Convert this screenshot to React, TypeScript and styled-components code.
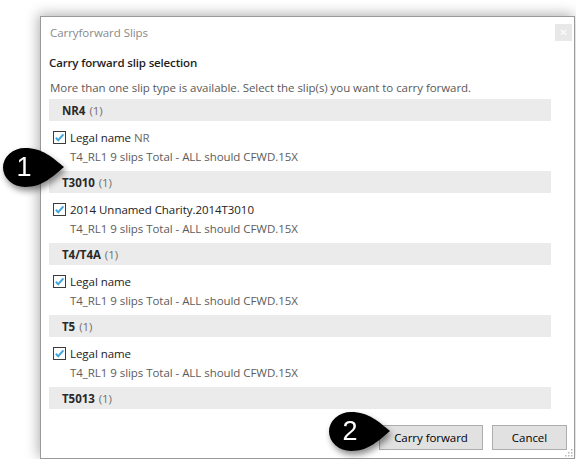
import React from 'react';
import styled, { createGlobalStyle } from 'styled-components';

const GlobalStyle = createGlobalStyle`
    html, body {
        margin: 0;
        padding: 0;
        background: #ffffff;
        overflow: hidden;
    }
    body {
        font-family: 'Open Sans', 'Noto Sans', sans-serif;
        font-size: 11.5px;
        letter-spacing: -0.05px;
    }
`;

type Slip = {
    label: string;
    suffix?: string;
    detail: string;
};

type Section = {
    name: string;
    count: number;
    slips: Slip[];
};

const DETAIL = 'T4_RL1 9 slips Total - ALL should CFWD.15X';

// T5013's slip sits below the fold of the list, so only its header is shown
const sections: Section[] = [
    { name: 'NR4', count: 1, slips: [{ label: 'Legal name', suffix: 'NR', detail: DETAIL }] },
    { name: 'T3010', count: 1, slips: [{ label: '2014 Unnamed Charity.2014T3010', detail: DETAIL }] },
    { name: 'T4/T4A', count: 1, slips: [{ label: 'Legal name', detail: DETAIL }] },
    { name: 'T5', count: 1, slips: [{ label: 'Legal name', detail: DETAIL }] },
    { name: 'T5013', count: 1, slips: [] },
];

const Page = styled.div`
    position: relative;
    width: 576px;
    height: 459px;
    padding: 16px 0 0 40px;
    box-sizing: border-box;
    overflow: hidden;
`;

const Dialog = styled.div`
    position: relative;
    width: 535px;
    height: 443px;
    box-sizing: border-box;
    border: 1px solid #9a9a9a;
    background: #ffffff;
    box-shadow: -2px -2px 12px rgba(0, 0, 0, 0.3);
    display: flex;
    flex-direction: column;
`;

const TitleBar = styled.div`
    height: 30px;
    display: flex;
    align-items: center;
    justify-content: space-between;
    padding: 0 1px 0 9px;
`;

const Title = styled.span`
    color: #8a8a8a;
`;

const CloseButton = styled.button`
    width: 17px;
    height: 17px;
    margin-top: 1px;
    margin-right: 1px;
    border: none;
    padding: 0;
    background: #e8e8e8;
    color: #ffffff;
    font-size: 10px;
    font-family: 'DejaVu Sans', sans-serif;
    display: flex;
    align-items: center;
    justify-content: center;
`;

const Body = styled.div`
    padding: 0 8px;
    display: flex;
    flex-direction: column;
`;

const Heading = styled.div`
    margin-top: 7px;
    line-height: 18px;
    font-weight: 600;
    letter-spacing: -0.15px;
    color: #1e1e1e;
`;

const Description = styled.div`
    margin-top: 7px;
    line-height: 18px;
    color: #5a5a5a;
    padding-left: 1px;
`;

const SlipList = styled.div`
    margin-top: 2px;
    width: 502px;
    height: 312px;
    overflow: hidden;
`;

const GroupHeader = styled.div`
    height: 22px;
    background: #ebebeb;
    display: flex;
    align-items: center;
    gap: 4px;
    padding-left: 13px;
`;

const GroupName = styled.span`
    font-weight: 700;
    color: #2a2a2a;
`;

const GroupCount = styled.span`
    color: #707070;
`;

const SlipItem = styled.div`
    padding: 7px 0 5px 4px;
`;

const SlipLine = styled.label`
    height: 19px;
    display: flex;
    align-items: center;
    gap: 4px;
    color: #222222;
`;

const Suffix = styled.span`
    color: #6a6a6a;
`;

const SlipDetail = styled.div`
    height: 19px;
    line-height: 19px;
    padding-left: 17px;
    color: #5c5c5c;
`;

const Footer = styled.div`
    margin-top: 14px;
    display: flex;
    justify-content: flex-end;
    gap: 9px;
    padding-right: 7px;
`;

const Button = styled.button<{ $width: number }>`
    width: ${props => props.$width}px;
    height: 25px;
    background: #e1e1e1;
    border: 1px solid #adadad;
    font-family: 'Open Sans', 'Noto Sans', sans-serif;
    font-size: 11.5px;
    letter-spacing: -0.05px;
    color: #000000;
    padding: 0;
`;

const Grip = styled.svg`
    position: absolute;
    right: 1px;
    bottom: 1px;
`;

const Callout = styled.div<{ $left: number; $top: number }>`
    position: absolute;
    left: ${props => props.$left}px;
    top: ${props => props.$top}px;
    width: 66px;
    height: 44px;
    filter: drop-shadow(2px 4px 3px rgba(0, 0, 0, 0.45));
`;

const CalloutNumber = styled.span`
    position: absolute;
    left: 0;
    top: 0;
    width: 46px;
    height: 42px;
    display: flex;
    align-items: center;
    justify-content: center;
    color: #ffffff;
    font-family: 'Liberation Sans', Arial, sans-serif;
    font-size: 27px;
    letter-spacing: 0;
`;

const CheckBox = () => (
    <svg width='13' height='13' viewBox='0 0 13 13'>
        <rect x='0.5' y='0.5' width='12' height='12' fill='#ffffff' stroke='#3c3c3c' />
        <path d='M2.8 6.8 L5.2 9.2 L10.4 3.4' fill='none' stroke='#45a6da' strokeWidth='2' />
    </svg>
);

const Bubble = ({ n, left, top }: { n: number; left: number; top: number }) => (
    <Callout $left={left} $top={top}>
        <svg width='66' height='44' viewBox='0 0 66 44'>
            <path d='M63 21 C52 12 42 2 24 2 A22 19.5 0 0 0 24 41 C42 41 52 30 63 21 Z' fill='#000000' />
        </svg>
        <CalloutNumber>{n}</CalloutNumber>
    </Callout>
);

const App = () => (
    <Page>
        <GlobalStyle />
        <Dialog>
            <TitleBar>
                <Title>Carryforward Slips</Title>
                <CloseButton>✕</CloseButton>
            </TitleBar>
            <Body>
                <Heading>Carry forward slip selection</Heading>
                <Description>
                    More than one slip type is available. Select the slip(s) you want to carry forward.
                </Description>
                <SlipList>
                    {sections.map(section => (
                        <div key={section.name}>
                            <GroupHeader>
                                <GroupName>{section.name}</GroupName>
                                <GroupCount>({section.count})</GroupCount>
                            </GroupHeader>
                            {section.slips.map((slip, i) => (
                                <SlipItem key={i}>
                                    <SlipLine>
                                        <CheckBox />
                                        <span>
                                            {slip.label}
                                            {slip.suffix && <Suffix> {slip.suffix}</Suffix>}
                                        </span>
                                    </SlipLine>
                                    <SlipDetail>{slip.detail}</SlipDetail>
                                </SlipItem>
                            ))}
                        </div>
                    ))}
                </SlipList>
            </Body>
            <Footer>
                <Button $width={104}>Carry forward</Button>
                <Button $width={75}>Cancel</Button>
            </Footer>
            <Grip width='10' height='10' viewBox='0 0 10 10'>
                {[[8, 0], [8, 3], [5, 3], [8, 6], [5, 6], [2, 6]].map(([x, y]) => (
                    <rect key={`${x}-${y}`} x={x} y={y + 2} width='1.5' height='1.5' fill='#b8b8b8' />
                ))}
            </Grip>
        </Dialog>
        <Bubble n={1} left={1} top={146} />
        <Bubble n={2} left={327} top={410} />
    </Page>
);

export default App;
